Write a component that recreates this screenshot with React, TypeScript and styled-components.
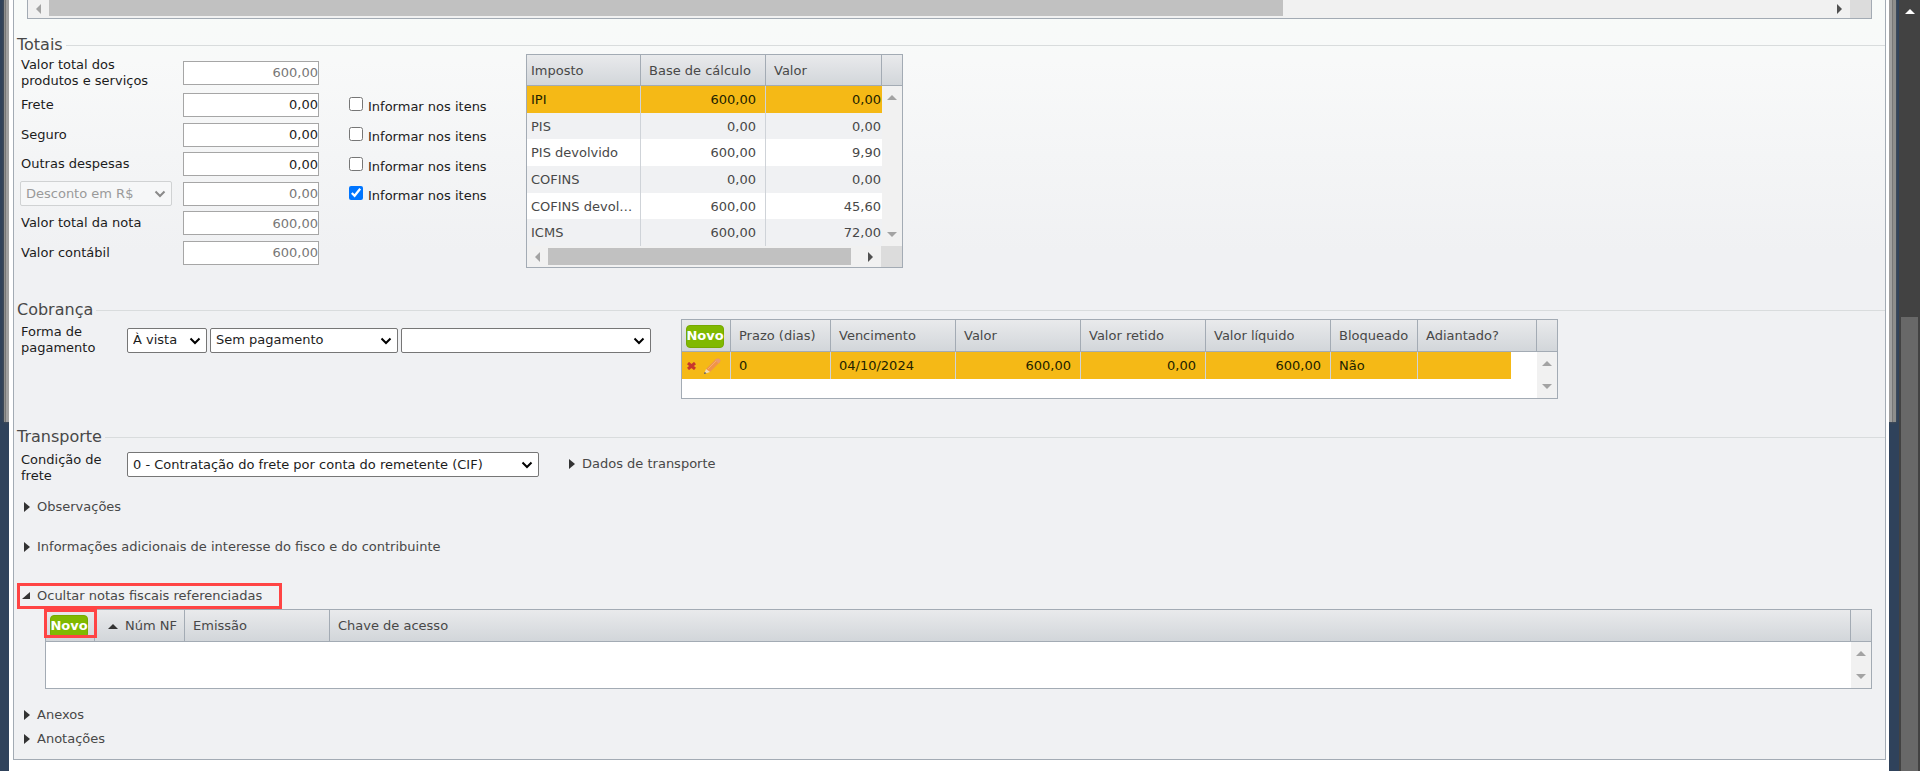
import React, { useState } from "react";
import styled, { createGlobalStyle, css } from "styled-components";

const colors = {
  navy: "#2f425b",
  frame: "#a3abb4",
  rule: "#d9dcdd",
  text: "#484848",
  dark: "#1c1c1c",
  selected: "#f5b916",
  alternate: "#f0f1f3",
  cellRule: "#cfd3d8",
  green: "#80b900",
  highlight: "#ff4444",
};

const GlobalStyle = createGlobalStyle`
  * { box-sizing: border-box; }
  body {
    margin: 0;
    background: ${colors.navy};
    font: 13px/16px Verdana, "DejaVu Sans", sans-serif;
    color: ${colors.text};
  }
  button, input, select { font: inherit; margin: 0; }
`;

const Page = styled.div`
  display: grid;
  grid-template-columns: 9px minmax(0, 1fr) 10px 21px;
  min-height: 100vh;
`;

const Rail = styled.div<{ $side: "left" | "right" }>`
  display: flex;
  justify-content: ${(p) => (p.$side === "left" ? "flex-end" : "flex-start")};
`;

const WindowEdge = styled.div<{ $side: "left" | "right" }>`
  width: ${(p) => (p.$side === "left" ? 5 : 7)}px;
  height: 422px;
  background: linear-gradient(
    ${(p) => (p.$side === "left" ? "to left" : "to right")},
    #a0a0a0 0 3px,
    #777777 3px 4px,
    #8e8e8c 4px
  );
  box-shadow: 0 0 3px #5a5a55;
`;

const Sheet = styled.main`
  position: relative;
  background: #ffffff;
  padding: 0 3px 0 4px;
`;

const Panel = styled.div`
  border: 1px solid ${colors.frame};
  border-top: 0;
  padding-bottom: 8px;
  background: linear-gradient(#f8fbf9 0, #f8f9f9 60px, ${colors.alternate} 250px);
`;

const PageScrollbar = styled.div`
  display: flex;
  flex-direction: column;
  align-items: center;
  background: #424242;
  padding-top: 9px;
`;

const PageThumb = styled.div`
  flex: 1;
  width: 17px;
  margin-top: 303px;
  background: #686868;
`;

const ItemsFooter = styled.div`
  margin: 0 13px;
  border: 1px solid ${colors.frame};
  border-top: 0;
`;

const HorizontalBar = styled.div<{ $height: number }>`
  display: flex;
  align-items: stretch;
  height: ${(p) => p.$height}px;
  background: #f1f1f1;
`;

const ArrowBox = styled.div`
  display: flex;
  align-items: center;
  justify-content: center;
  width: 21px;
`;

const Track = styled.div<{ $top: number }>`
  flex: 1;
  padding: ${(p) => p.$top}px 0 2px;
`;

const Thumb = styled.div<{ $share: string }>`
  width: ${(p) => p.$share};
  height: 100%;
  background: #c1c1c1;
`;

const Corner = styled.div`
  width: 21px;
  background: #dcdcdc;
`;

const VerticalBar = styled.div<{ $height: number }>`
  display: flex;
  flex-direction: column;
  align-items: center;
  justify-content: space-between;
  height: ${(p) => p.$height}px;
  padding: 9px 0;
  background: #f1f1f1;
`;

const Section = styled.section<{ $gap: number }>`
  margin-top: ${(p) => p.$gap}px;
`;

const SectionHeader = styled.header`
  display: flex;
  align-items: center;
  gap: 3px;
  height: 18px;
  padding-left: 3px;
  &::after {
    content: "";
    flex: 1;
    border-top: 1px solid ${colors.rule};
  }
`;

const SectionTitle = styled.h2`
  margin: 0;
  font-size: 16px;
  line-height: 20px;
  font-weight: 400;
`;

const SectionBody = styled.div`
  display: flex;
  align-items: flex-start;
`;

const TotalsForm = styled.div`
  display: grid;
  grid-template-columns: 163px 166px 177px;
  grid-template-rows: 33px 31px 29px 30px 29px 30px 29px;
  align-items: center;
  padding: 2px 0 0 6px;
`;

const FieldLabel = styled.label`
  grid-column: 1;
  max-width: 141px;
  padding-left: 1px;
  color: ${colors.dark};
`;

const AmountInput = styled.input<{ $muted?: boolean }>`
  grid-column: 2;
  width: 136px;
  height: 24px;
  padding: 0;
  border: 1px solid #a6a6a6;
  border-radius: 0;
  background: #ffffff;
  text-align: right;
  color: ${(p) => (p.$muted ? "#777777" : colors.dark)};
`;

const CheckLabel = styled.label`
  grid-column: 3;
  display: flex;
  align-items: flex-end;
  gap: 5px;
  padding-top: 3px;
  color: ${colors.dark};
  input {
    width: 14px;
    height: 14px;
    margin-bottom: 4px;
  }
`;

const SelectBox = styled.span<{ $width: number }>`
  position: relative;
  width: ${(p) => p.$width}px;
  height: 25px;
  svg {
    position: absolute;
    top: 9px;
    right: 6px;
    pointer-events: none;
  }
`;

const NativeSelect = styled.select`
  appearance: none;
  display: block;
  width: 100%;
  height: 100%;
  padding: 0 20px 0 5px;
  border: 1px solid #767676;
  border-radius: 2px;
  background-color: #ffffff;
  color: ${colors.dark};
  &:disabled {
    border-color: #d0d2d3;
    background-color: #f6f7f8;
    color: #9a9a9a;
    opacity: 1;
  }
`;

const FieldRow = styled.div<{ $align: string; $top: number }>`
  display: flex;
  align-items: ${(p) => p.$align};
  gap: 3px;
  padding: ${(p) => p.$top}px 0 0 7px;
`;

const NarrowLabel = styled.label`
  width: 103px;
  padding-right: 16px;
  color: ${colors.dark};
`;

const PaymentFields = styled.div`
  width: 667px;
`;

const GridFrame = styled.div<{ $width?: number }>`
  ${(p) => p.$width && css`width: ${p.$width}px;`}
  border: 1px solid ${colors.frame};
  background: #ffffff;
`;

const ReferencedNotes = styled.div`
  margin: 0 13px 14px 31px;
`;

const Grid = styled.table`
  width: 100%;
  table-layout: fixed;
  border-collapse: separate;
  border-spacing: 0;
`;

const HeadCell = styled.th<{ $pad?: number; $height?: number }>`
  position: relative;
  height: ${(p) => p.$height ?? 32}px;
  padding: 1px 0 0 ${(p) => p.$pad ?? 8}px;
  border-right: 1px solid ${colors.frame};
  border-bottom: 1px solid ${colors.frame};
  background: linear-gradient(#e9eaec, #d2d6da);
  font-weight: 400;
  text-align: left;
  white-space: nowrap;
  &:last-child { border-right: 0; }
`;

const Cell = styled.td<{ $pad?: number; $right?: number; $end?: boolean }>`
  padding: 1px ${(p) => p.$right ?? 4}px 0 ${(p) => p.$pad ?? 8}px;
  border-right: ${(p) => (p.$end ? 0 : 1)}px solid ${colors.cellRule};
  text-align: ${(p) => (p.$right === undefined ? "left" : "right")};
  overflow: hidden;
  text-overflow: ellipsis;
  white-space: nowrap;
`;

const Row = styled.tr<{ $selected?: boolean; $striped?: boolean }>`
  height: 27px;
  color: ${(p) => (p.$selected ? "#222200" : colors.text)};
  ${Cell} {
    background: ${(p) =>
      p.$selected ? colors.selected : p.$striped ? colors.alternate : "#ffffff"};
  }
  &:nth-child(3n + 2) { height: 26px; }
`;

const BlankCell = styled.td<{ $height?: number }>`
  height: ${(p) => p.$height ?? 20}px;
  padding: 0;
  background: #ffffff;
`;

const BarCell = styled.td`
  padding: 0;
  vertical-align: top;
`;

const NewButton = styled.button`
  display: flex;
  justify-content: center;
  width: 38px;
  height: 23px;
  padding: 0;
  border: 1px solid #76a800;
  border-radius: 4px;
  background: ${colors.green};
  color: #ffffff;
  font-weight: 700;
  line-height: 20px;
`;

const ButtonHighlight = styled.span`
  position: absolute;
  top: -1px;
  left: -2px;
  z-index: 1;
  width: 53px;
  height: 29px;
  border: 3px solid ${colors.highlight};
  pointer-events: none;
`;

const SortLabel = styled.span`
  display: flex;
  align-items: center;
  gap: 7px;
`;

const RowActions = styled.div`
  display: flex;
  align-items: center;
  gap: 8px;
`;

const IconButton = styled.button`
  display: flex;
  padding: 0;
  border: 0;
  background: none;
`;

const Disclosure = styled.button<{ $top?: number; $highlighted?: boolean }>`
  display: flex;
  align-items: center;
  gap: 7px;
  height: 24px;
  margin-top: ${(p) => p.$top ?? 0}px;
  padding: 0 0 0 10px;
  border: 0;
  background: none;
  color: ${colors.text};
  white-space: nowrap;
  ${(p) =>
    p.$highlighted &&
    css`
      width: 265px;
      height: 26px;
      margin-left: 3px;
      padding-left: 2px;
      border: 3px solid ${colors.highlight};
    `}
`;

const ShippingDisclosure = styled(Disclosure)`
  margin-left: 17px;
`;

type Direction = "up" | "down" | "left" | "right";

const shapes: Record<Direction, [number, number, string]> = {
  up: [10, 5, "0,5 10,5 5,0"],
  down: [10, 5, "0,0 10,0 5,5"],
  left: [5, 10, "5,0 5,10 0,5"],
  right: [5, 10, "0,0 0,10 5,5"],
};

function Arrow({ to, fill = "#a3a3a3" }: { to: Direction; fill?: string }) {
  const [width, height, points] = shapes[to];
  return (
    <svg width={width} height={height} aria-hidden="true">
      <polygon points={points} fill={fill} />
    </svg>
  );
}

function Marker({ open }: { open?: boolean }) {
  return (
    <svg width={open ? 8 : 6} height="10" aria-hidden="true">
      <polygon points={open ? "8,1 8,8 0,8" : "0,0 6,5 0,10"} fill="#333333" />
    </svg>
  );
}

function DeleteIcon() {
  return (
    <svg width="9" height="8" viewBox="0 0 9 8" aria-hidden="true">
      <path d="M1 1 L8 7 M8 1 L1 7" stroke="#c8372d" strokeWidth="3" />
    </svg>
  );
}

function PencilIcon() {
  return (
    <svg width="17" height="16" viewBox="0 0 17 16" aria-hidden="true">
      <path d="M2 11 L12 1 Q14 0 15.500 1 Q17 2 16 4 L6 14 Z" fill="#f0944a" />
      <path d="M4 11 L13 2" stroke="#f7ae6a" strokeWidth="1" />
      <path d="M12 1 Q14 0 15.500 1 Q17 2 16 4 L14.500 5.500 L11 2 Z" fill="#e99a70" />
      <path d="M2 11 L6 14 L0 16 Z" fill="#f4dcb4" />
      <path d="M0.700 14 L2.500 15.200 L0 16 Z" fill="#444444" />
    </svg>
  );
}

interface SelectProps {
  width: number;
  label?: string;
  id?: string;
  disabled?: boolean;
  value: string;
}

function Select({ width, label, id, disabled, value }: SelectProps) {
  return (
    <SelectBox $width={width}>
      <NativeSelect id={id} aria-label={label} disabled={disabled}>
        <option>{value}</option>
      </NativeSelect>
      <svg width="12" height="8" aria-hidden="true">
        <path
          d="M1.500 1.500 L6 6 L10.500 1.500"
          fill="none"
          stroke={disabled ? "#8a8a8a" : "#000000"}
          strokeWidth="2"
        />
      </svg>
    </SelectBox>
  );
}

function ScrollCell({ rows, height }: { rows: number; height: number }) {
  return (
    <BarCell rowSpan={rows}>
      <VerticalBar $height={height}>
        <Arrow to="up" />
        <Arrow to="down" />
      </VerticalBar>
    </BarCell>
  );
}

const taxes = [
  ["IPI", "600,00", "0,00"],
  ["PIS", "0,00", "0,00"],
  ["PIS devolvido", "600,00", "9,90"],
  ["COFINS", "0,00", "0,00"],
  ["COFINS devolvido", "600,00", "45,60"],
  ["ICMS", "600,00", "72,00"],
];

function TaxGrid() {
  return (
    <GridFrame $width={377}>
      <Grid>
        <colgroup>
          {[114, 125, 116, 20].map((width, i) => (
            <col key={i} width={width} />
          ))}
        </colgroup>
        <thead>
          <tr>
            <HeadCell $pad={4} $height={31}>Imposto</HeadCell>
            <HeadCell $height={31}>Base de cálculo</HeadCell>
            <HeadCell $height={31}>Valor</HeadCell>
            <HeadCell $height={31} />
          </tr>
        </thead>
        <tbody>
          {taxes.map(([name, base, value], i) => (
            <Row key={name} $selected={i === 0} $striped={i % 2 === 1}>
              <Cell $pad={4}>{name}</Cell>
              <Cell $right={9}>{base}</Cell>
              <Cell $right={1} $end>{value}</Cell>
              {i === 0 && <ScrollCell rows={taxes.length} height={160} />}
            </Row>
          ))}
        </tbody>
      </Grid>
      <HorizontalBar $height={21}>
        <ArrowBox><Arrow to="left" /></ArrowBox>
        <Track $top={2}><Thumb $share="97%" /></Track>
        <ArrowBox><Arrow to="right" fill="#505050" /></ArrowBox>
        <Corner />
      </HorizontalBar>
    </GridFrame>
  );
}

function InstallmentGrid() {
  return (
    <GridFrame $width={877}>
      <Grid>
        <colgroup>
          {[49, 100, 125, 125, 125, 125, 87, 93, 26, 20].map((width, i) => (
            <col key={i} width={width} />
          ))}
        </colgroup>
        <thead>
          <tr>
            <HeadCell $pad={4}><NewButton type="button">Novo</NewButton></HeadCell>
            <HeadCell>Prazo (dias)</HeadCell>
            <HeadCell>Vencimento</HeadCell>
            <HeadCell>Valor</HeadCell>
            <HeadCell>Valor retido</HeadCell>
            <HeadCell>Valor líquido</HeadCell>
            <HeadCell>Bloqueado</HeadCell>
            <HeadCell colSpan={2}>Adiantado?</HeadCell>
            <HeadCell />
          </tr>
        </thead>
        <tbody>
          <Row $selected>
            <Cell $pad={5}>
              <RowActions>
                <IconButton type="button" aria-label="Excluir"><DeleteIcon /></IconButton>
                <IconButton type="button" aria-label="Editar"><PencilIcon /></IconButton>
              </RowActions>
            </Cell>
            <Cell>0</Cell>
            <Cell>04/10/2024</Cell>
            <Cell $right={9}>600,00</Cell>
            <Cell $right={9}>0,00</Cell>
            <Cell $right={9}>600,00</Cell>
            <Cell>Não</Cell>
            <Cell $end />
            <BlankCell />
            <ScrollCell rows={2} height={46} />
          </Row>
          <tr><BlankCell colSpan={9} $height={19} /></tr>
        </tbody>
      </Grid>
    </GridFrame>
  );
}

function NotesGrid() {
  return (
    <GridFrame>
      <Grid>
        <colgroup>
          <col width={49} />
          <col width={90} />
          <col width={145} />
          <col />
          <col width={20} />
        </colgroup>
        <thead>
          <tr>
            <HeadCell $pad={4}>
              <NewButton type="button">Novo</NewButton>
              <ButtonHighlight />
            </HeadCell>
            <HeadCell $pad={13}>
              <SortLabel><Arrow to="up" fill="#333333" />Núm NF</SortLabel>
            </HeadCell>
            <HeadCell>Emissão</HeadCell>
            <HeadCell>Chave de acesso</HeadCell>
            <HeadCell />
          </tr>
        </thead>
        <tbody>
          <tr>
            <BlankCell colSpan={4} />
            <ScrollCell rows={1} height={46} />
          </tr>
        </tbody>
      </Grid>
    </GridFrame>
  );
}

function ItemCheck({ checked = false }: { checked?: boolean }) {
  return (
    <CheckLabel>
      <input type="checkbox" defaultChecked={checked} />
      Informar nos itens
    </CheckLabel>
  );
}

export default function App() {
  const [notesOpen, setNotesOpen] = useState(true);
  return (
    <>
      <GlobalStyle />
      <Page>
        <Rail $side="left"><WindowEdge $side="left" /></Rail>
        <Sheet>
          <Panel>
            <ItemsFooter>
              <HorizontalBar $height={18}>
                <ArrowBox><Arrow to="left" /></ArrowBox>
                <Track $top={0}><Thumb $share="69.3%" /></Track>
                <ArrowBox><Arrow to="right" fill="#505050" /></ArrowBox>
                <Corner />
              </HorizontalBar>
            </ItemsFooter>

            <Section $gap={17}>
              <SectionHeader><SectionTitle>Totais</SectionTitle></SectionHeader>
              <SectionBody>
                <TotalsForm>
                  <FieldLabel htmlFor="products">Valor total dos produtos e serviços</FieldLabel>
                  <AmountInput id="products" defaultValue="600,00" readOnly $muted />
                  <FieldLabel htmlFor="freight">Frete</FieldLabel>
                  <AmountInput id="freight" defaultValue="0,00" />
                  <ItemCheck />
                  <FieldLabel htmlFor="insurance">Seguro</FieldLabel>
                  <AmountInput id="insurance" defaultValue="0,00" />
                  <ItemCheck />
                  <FieldLabel htmlFor="expenses">Outras despesas</FieldLabel>
                  <AmountInput id="expenses" defaultValue="0,00" />
                  <ItemCheck />
                  <Select width={152} label="Tipo de desconto" value="Desconto em R$" disabled />
                  <AmountInput aria-label="Desconto" defaultValue="0,00" readOnly $muted />
                  <ItemCheck checked />
                  <FieldLabel htmlFor="total">Valor total da nota</FieldLabel>
                  <AmountInput id="total" defaultValue="600,00" readOnly $muted />
                  <FieldLabel htmlFor="book">Valor contábil</FieldLabel>
                  <AmountInput id="book" defaultValue="600,00" readOnly $muted />
                </TotalsForm>
                <TaxGrid />
              </SectionBody>
            </Section>

            <Section $gap={33}>
              <SectionHeader><SectionTitle>Cobrança</SectionTitle></SectionHeader>
              <SectionBody>
                <PaymentFields>
                  <FieldRow $align="center" $top={5}>
                    <NarrowLabel htmlFor="term">Forma de pagamento</NarrowLabel>
                    <Select id="term" width={80} value="À vista" />
                    <Select label="Meio de pagamento" width={188} value="Sem pagamento" />
                    <Select label="Conta" width={250} value="" />
                  </FieldRow>
                </PaymentFields>
                <InstallmentGrid />
              </SectionBody>
            </Section>

            <Section $gap={29}>
              <SectionHeader><SectionTitle>Transporte</SectionTitle></SectionHeader>
              <FieldRow $align="flex-start" $top={6}>
                <NarrowLabel htmlFor="shipping">Condição de frete</NarrowLabel>
                <Select
                  id="shipping"
                  width={412}
                  value="0 - Contratação do frete por conta do remetente (CIF)"
                />
                <ShippingDisclosure type="button">
                  <Marker />Dados de transporte
                </ShippingDisclosure>
              </FieldRow>
            </Section>

            <Disclosure type="button" $top={11}><Marker />Observações</Disclosure>
            <Disclosure type="button" $top={16}>
              <Marker />Informações adicionais de interesse do fisco e do contribuinte
            </Disclosure>
            <Disclosure
              type="button"
              $top={24}
              $highlighted
              aria-expanded={notesOpen}
              onClick={() => setNotesOpen(!notesOpen)}
            >
              <Marker open={notesOpen} />
              {notesOpen ? "Ocultar" : "Exibir"} notas fiscais referenciadas
            </Disclosure>
            {notesOpen && <ReferencedNotes><NotesGrid /></ReferencedNotes>}
            <Disclosure type="button"><Marker />Anexos</Disclosure>
            <Disclosure type="button"><Marker />Anotações</Disclosure>
          </Panel>
        </Sheet>
        <Rail $side="right"><WindowEdge $side="right" /></Rail>
        <PageScrollbar>
          <Arrow to="up" fill="#ffffff" />
          <PageThumb />
        </PageScrollbar>
      </Page>
    </>
  );
}
